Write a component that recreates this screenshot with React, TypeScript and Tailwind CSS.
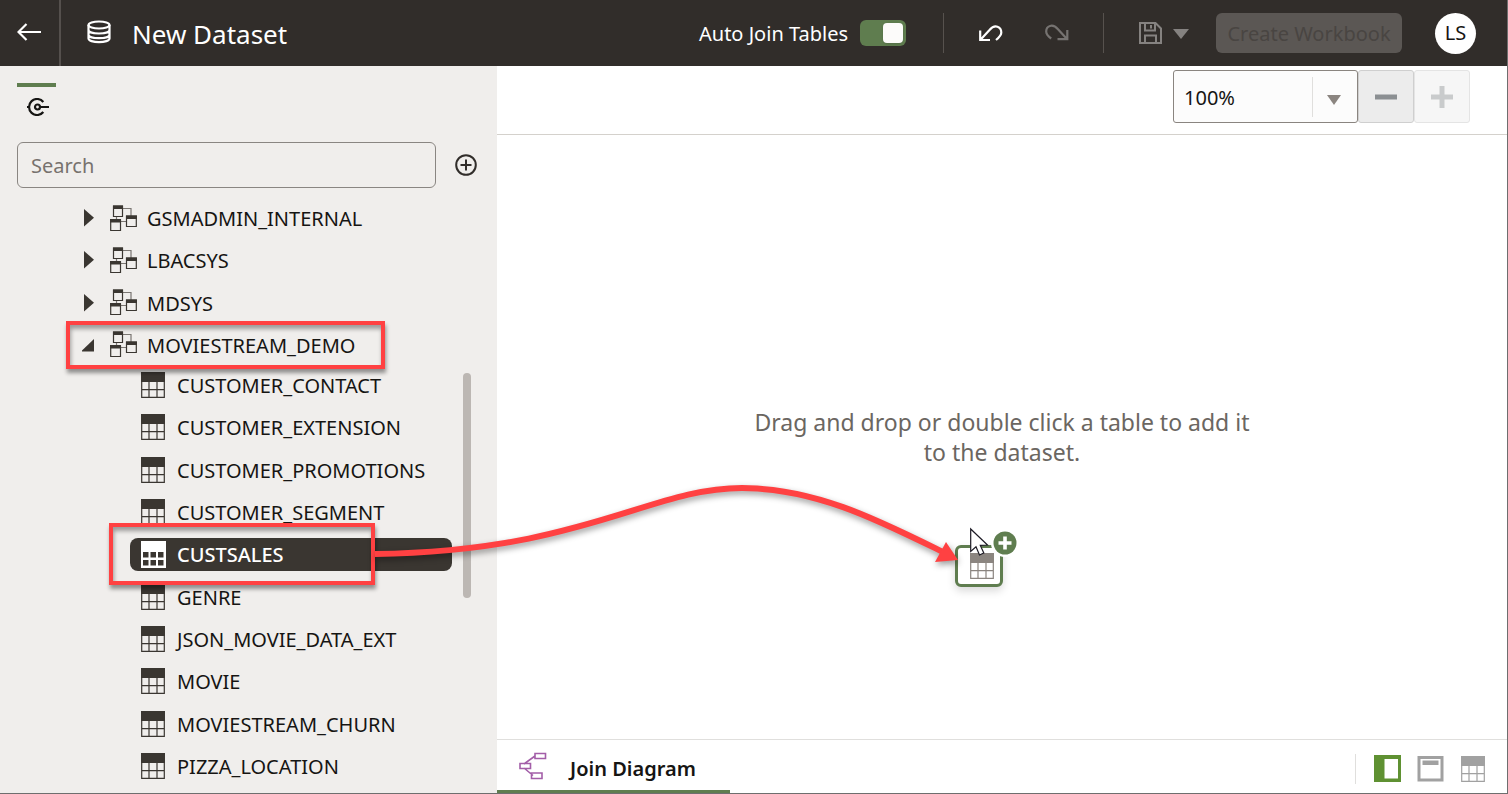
import React, { useState } from "react";

const schemas = ["GSMADMIN_INTERNAL", "LBACSYS", "MDSYS", "MOVIESTREAM_DEMO"];

const tables = [
  "CUSTOMER_CONTACT",
  "CUSTOMER_EXTENSION",
  "CUSTOMER_PROMOTIONS",
  "CUSTOMER_SEGMENT",
  "CUSTSALES",
  "GENRE",
  "JSON_MOVIE_DATA_EXT",
  "MOVIE",
  "MOVIESTREAM_CHURN",
  "PIZZA_LOCATION",
];

function TableIcon({ className = "" }: { className?: string }) {
  return (
    <svg width="24" height="26" viewBox="0 0 24 26" className={className} aria-hidden="true">
      <path fill="currentColor" d="M0 0h24v10H0z" />
      <path
        fill="none"
        stroke="currentColor"
        strokeWidth="1.2"
        d="M.7 10v15.3h22.6V10M8 10v15M16 10v15M1 17.7h22"
      />
    </svg>
  );
}

function SelectedTableIcon() {
  return (
    <svg width="25" height="27" viewBox="0 0 25 27" className="shrink-0 text-white" aria-hidden="true">
      <path
        fill="currentColor"
        fillRule="evenodd"
        d="M0 0h25v27H0zM2 11v5.500h5.500V11zM9.500 11v5.500h5.500V11zM17 11v5.500h5.500V11zM2 19v5.500h5.500V19zM9.500 19v5.500h5.500V19zM17 19v5.500h5.500V19z"
      />
    </svg>
  );
}

function SchemaIcon() {
  return (
    <svg width="27" height="27" viewBox="0 0 27 27" className="shrink-0 text-[#3a3631]" aria-hidden="true">
      <path fill="none" stroke="#7a7672" strokeWidth="1.2" d="M13 3.500h8V11M6.500 15v-3.500M11 16.500h5" />
      <g fill="none" stroke="currentColor" strokeWidth="1.2">
        <path d="M3.500 1v10.500h9V1zM.7 15v10.500h9.800V15zM16.500 11v10.500h9.800V11z" />
      </g>
      <path fill="currentColor" d="M3 .5h10v3.500H3zM0 14h11v3.500H0zM16 10.500h11V14H16z" />
    </svg>
  );
}

function Header() {
  const [autoJoin, setAutoJoin] = useState(true);
  return (
    <header className="flex h-[66px] shrink-0 items-center bg-[#312d2a] pr-[31px] text-white">
      <button aria-label="Back" className="flex h-full w-[61px] items-center border-r-2 border-[#55504d] pb-0.5 pl-[17px]">
        <svg width="24" height="18" viewBox="0 0 24 18" fill="none" stroke="currentColor" strokeWidth="2.2" aria-hidden="true">
          <path d="M24 9H2M9.500 1 1.500 9l8 8" />
        </svg>
      </button>
      <svg width="24" height="24" viewBox="0 0 24 24" fill="none" stroke="currentColor" strokeWidth="2.2" className="mb-0.5 ml-[26px]" aria-hidden="true">
        <ellipse cx="12" cy="5" rx="10.500" ry="3.500" />
        <path d="M1.500 5v13.500c0 2 4.700 3.700 10.500 3.700s10.500-1.700 10.500-3.700V5M1.500 10c0 2 4.700 3.500 10.500 3.500S22.500 12 22.500 10M1.500 14.700c0 2 4.700 3.500 10.500 3.500s10.500-1.500 10.500-3.500" />
      </svg>
      <h1 className="ml-[21px] whitespace-nowrap pt-0.5 text-[26px] leading-8">New Dataset</h1>

      <div className="ml-auto flex items-center">
        <label htmlFor="auto-join" className="mr-3 whitespace-nowrap pt-0.5 text-xl">
          Auto Join Tables
        </label>
        <input
          id="auto-join"
          type="checkbox"
          role="switch"
          checked={autoJoin}
          onChange={() => setAutoJoin(!autoJoin)}
          className="flex h-[26px] w-[46px] appearance-none items-center rounded-md bg-[#767170] px-[3px] before:h-5 before:w-5 before:rounded before:bg-[#fcfbfa] before:shadow-sm checked:justify-end checked:bg-[#5f7d4f]"
        />
        <div className="ml-[37px] h-10 w-px bg-[#57524e]" />
        <button aria-label="Undo" className="ml-[35px]">
          <svg width="24" height="18" viewBox="0 0 24 18" fill="none" stroke="currentColor" strokeWidth="2.200" aria-hidden="true">
            <path d="M1.200 6.500v9.500h9.800M2 15.200 10.500 6C16-.5 22.300 3 22.300 8.500c0 3-2 4.800-5.300 7.500" />
          </svg>
        </button>
        <button aria-label="Redo" className="ml-[42px] text-[#767371]">
          <svg width="24" height="18" viewBox="0 0 24 18" fill="none" stroke="currentColor" strokeWidth="2.200" aria-hidden="true">
            <path d="M22.300 6v9.200h-9.800M21.500 14.500 13 5.200C7.500-1 1.200 2 1.200 7.500c0 3 2 4.800 5 7" />
          </svg>
        </button>
        <div className="ml-[34px] h-10 w-px bg-[#57524e]" />
        <button aria-label="Save" className="ml-[35px] text-[#858280]">
          <svg width="23" height="22" viewBox="0 0 23 22" fill="none" stroke="currentColor" strokeWidth="2" aria-hidden="true">
            <path d="M1 1h15.500l5.500 5.500V21H1zM6 1v7.500h10V1M12 3v3.500M6 21v-7.500h11V21" />
          </svg>
        </button>
        <button aria-label="Save options" className="ml-[11px] pt-0.5 text-[#858280]">
          <svg width="16" height="10" viewBox="0 0 16 10" fill="currentColor" aria-hidden="true">
            <path d="M0 0h16L8 10z" />
          </svg>
        </button>
        <button disabled className="ml-[27px] h-10 w-[186px] whitespace-nowrap rounded-md bg-[#5b5754] pt-0.5 text-xl text-[#494542]">
          Create Workbook
        </button>
        <button className="ml-[33px] h-[41px] w-[41px] rounded-full bg-white text-xl text-[#161513]">LS</button>
      </div>
    </header>
  );
}

function Highlight({ className }: { className: string }) {
  return (
    <span
      className={`pointer-events-none absolute z-10 border-4 border-[#ff4142] shadow-[1px_4px_4px_rgba(0,0,0,0.4),inset_1px_4px_4px_rgba(0,0,0,0.35)] ${className}`}
    />
  );
}

function SchemaRow({ name, open }: { name: string; open: boolean }) {
  return (
    <li className="relative flex items-center">
      <button aria-expanded={open} className="flex w-full items-center text-left text-xl">
        <svg width="14" height="18" viewBox="0 0 14 18" fill="#3a3631" className="mr-[14px] shrink-0" aria-hidden="true">
          {open ? <path d="M12 3v12.500H-1z" /> : <path d="M2 0v17.500L12 8.700z" />}
        </svg>
        <SchemaIcon />
        <span className="ml-[10px] pt-0.5">{name}</span>
      </button>
      {open && <Highlight className="-left-4 -top-[3px] h-12 w-[319px]" />}
    </li>
  );
}

function TableRow({ name, selected }: { name: string; selected: boolean }) {
  return (
    <li className="relative flex items-center">
      <button
        className={`flex h-[33px] w-[322px] items-center rounded-lg pl-[11px] text-left text-xl ${
          selected ? "bg-[#3a3631] text-white" : ""
        }`}
      >
        {selected ? <SelectedTableIcon /> : <TableIcon className="mr-px shrink-0 text-[#3a3631]" />}
        <span className={`ml-[11px] pt-0.5 ${selected ? "font-medium" : ""}`}>{name}</span>
      </button>
      {selected && <Highlight className="-left-[21px] -top-[10px] h-[62px] w-[266px]" />}
    </li>
  );
}

function Sidebar() {
  return (
    <aside className="w-[497px] shrink-0 bg-[#f0eeec]">
      <div className="ml-[17px] mt-[17px] w-[39px] border-t-4 border-[#5f7d4f]">
        <button aria-label="Connections" className="flex w-full justify-center pl-[3px] pt-[11px]">
          <svg width="24" height="18" viewBox="0 0 24 18" fill="none" stroke="#161513" strokeWidth="2.2" aria-hidden="true">
            <path d="M1 9h3M14 9h9M17.300 4A8 8 0 1 0 17.300 14" />
            <circle cx="11.500" cy="9" r="2.500" />
          </svg>
        </button>
      </div>
      <div className="mt-[26px] flex items-center pl-[17px]">
        <input
          aria-label="Search"
          placeholder="Search"
          className="h-[46px] w-[419px] rounded-md border border-[#8a8682] bg-transparent px-[13px] text-xl placeholder:text-[#77726e]"
        />
        <button aria-label="Add connection" className="ml-[19px]">
          <svg width="22" height="22" viewBox="0 0 22 22" fill="none" stroke="#312d2a" strokeWidth="2" aria-hidden="true">
            <circle cx="11" cy="11" r="9.800" />
            <path d="M11 5.500v11M5.500 11h11" />
          </svg>
        </button>
      </div>
      <div className="relative mt-[9px]">
        <ul className="grid h-[169px] auto-rows-fr pl-[82px]">
          {schemas.map((name) => (
            <SchemaRow key={name} name={name} open={name === "MOVIESTREAM_DEMO"} />
          ))}
        </ul>
        <ul className="-mt-0.5 grid h-[423px] auto-rows-fr pl-[130px]">
          {tables.map((name) => (
            <TableRow key={name} name={name} selected={name === "CUSTSALES"} />
          ))}
        </ul>
        <div className="absolute right-[26px] top-44 h-[225px] w-2 rounded bg-[#bcb7b3]" />
      </div>
    </aside>
  );
}

function ZoomBar() {
  return (
    <div className="flex h-[69px] items-start justify-end border-b border-[#d4d1cc] pr-[37px] pt-1">
      <div className="relative">
        <select
          aria-label="Zoom"
          className="h-[53px] w-[185px] appearance-none rounded-[3px] border border-[#8a8580] bg-[#fcfcfc] pl-[10px] pt-0.5 text-xl"
        >
          <option>100%</option>
        </select>
        <span className="pointer-events-none absolute right-0 top-[7px] flex h-10 w-[46px] items-center justify-center border-l border-[#e0dfdd] pr-1 pt-1.5">
          <svg width="14" height="10" viewBox="0 0 14 10" fill="#8b8580" aria-hidden="true">
            <path d="M0 0h14L7 10z" />
          </svg>
        </span>
      </div>
      <button aria-label="Zoom out" className="flex h-[53px] w-14 items-center justify-center rounded-[3px] border border-[#cfcfcf] bg-[#ececec]">
        <svg width="22" height="22" viewBox="0 0 22 22" fill="#8b8f92" aria-hidden="true">
          <path d="M0 8.500h22v5H0z" />
        </svg>
      </button>
      <button aria-label="Zoom in" className="flex h-[53px] w-14 items-center justify-center rounded-[3px] border border-[#e4e4e4] bg-[#f6f6f6]">
        <svg width="22" height="22" viewBox="0 0 22 22" fill="#c9cbcc" aria-hidden="true">
          <path d="M0 8.500h8.500V0h5v8.500H22v5h-8.500V22h-5v-8.500H0z" />
        </svg>
      </button>
    </div>
  );
}

function DropTarget() {
  return (
    <div className="absolute left-[458px] top-[391px] h-[61px] w-16">
      <div className="absolute left-0 top-[19px] flex h-[42px] w-12 items-end justify-center rounded-md border-[3px] border-[#5f7d4f] bg-white pb-[5px] pl-1.5 shadow-[0_4px_8px_rgba(0,0,0,0.15)]">
        <TableIcon className="text-[#8b8580]" />
      </div>
      <svg width="50" height="34" viewBox="0 0 50 34" className="absolute left-[14px] top-0" aria-hidden="true">
        <circle cx="36" cy="17" r="14" fill="#fff" />
        <circle cx="36" cy="17" r="11.500" fill="#5f7d4f" />
        <path fill="#fff" d="M29.500 15.200h4.700v-4.700h3.600v4.700h4.700v3.600h-4.700v4.700h-3.600v-4.700h-4.700z" />
        <path
          fill="#fff"
          stroke="#1c1a24"
          strokeWidth="1.200"
          d="M1.700 3v22.500l5.300-4.700 3.500 8.200 4.300-2-3.500-7.600 7.200-.4z"
        />
      </svg>
    </div>
  );
}

function BottomBar() {
  return (
    <div className="flex h-[54px] shrink-0 items-stretch border-t border-[#e0dfdd] pr-[21px]">
      <button className="flex w-[233px] items-center border-b-[3px] border-[#5f7d4f] pl-[22px] pt-2 text-xl font-semibold text-[#161513]">
        <svg width="28" height="28" viewBox="0 0 28 28" fill="none" stroke="#a35ea8" strokeWidth="1.600" className="mb-1.5 mr-[23px] shrink-0" aria-hidden="true">
          <path d="M5 12 16 4M5 16l9 7.500M16 1.500h10.500v5H16zM1 11.500h10.500v5H1zM12.500 21H23v5.500H12.500z" />
        </svg>
        <span className="whitespace-nowrap">Join Diagram</span>
      </button>
      <div className="ml-auto flex items-center pt-1">
        <div className="mr-[18px] h-[30px] w-px bg-[#e0dfdd]" />
        <button aria-label="Show side panel">
          <svg width="27" height="27" viewBox="0 0 27 27" aria-hidden="true">
            <path fill="#5f9132" d="M0 0h27v27H0z" />
            <path fill="#fff" d="M10.500 4H24v19.500H10.500z" />
          </svg>
        </button>
        <button aria-label="Show header panel" className="ml-4">
          <svg width="27" height="27" viewBox="0 0 27 27" aria-hidden="true">
            <path fill="none" stroke="#a1a1a1" strokeWidth="3" d="M2 2.500h23V25H2z" />
            <path fill="#a1a1a1" d="M5.500 5.500h16V10h-16z" />
          </svg>
        </button>
        <button aria-label="Show table panel" className="ml-[17px] pr-px">
          <TableIcon className="text-[#a1a1a1]" />
        </button>
      </div>
    </div>
  );
}

function DragArrow() {
  return (
    <svg
      width="600"
      height="100"
      viewBox="0 0 600 100"
      className="pointer-events-none absolute left-[370px] top-[475px] z-20 drop-shadow-[1px_3px_3px_rgba(0,0,0,0.4)]"
      aria-hidden="true"
    >
      <path fill="none" stroke="#ff4142" strokeWidth="6" d="M5 79C215 76 280 13 372 13c75 0 140 34 203 65" />
      <path fill="#ff4142" d="M588 85 576 67l-11 20z" />
    </svg>
  );
}

export default function App() {
  return (
    <div className="relative flex min-h-screen flex-col overflow-hidden border-b border-r border-[#6e6e6e] bg-white font-['Noto_Sans','Open_Sans',sans-serif] text-[#161513]">
      <Header />
      <div className="flex grow">
        <Sidebar />
        <main className="flex min-w-0 grow flex-col">
          <ZoomBar />
          <section className="relative grow pt-[272px]">
            <p className="mx-auto max-w-[510px] text-center text-[23px] leading-[30px] text-[#6b6661]">
              Drag and drop or double click a table to add it to the dataset.
            </p>
            <DropTarget />
          </section>
          <BottomBar />
        </main>
      </div>
      <DragArrow />
    </div>
  );
}
